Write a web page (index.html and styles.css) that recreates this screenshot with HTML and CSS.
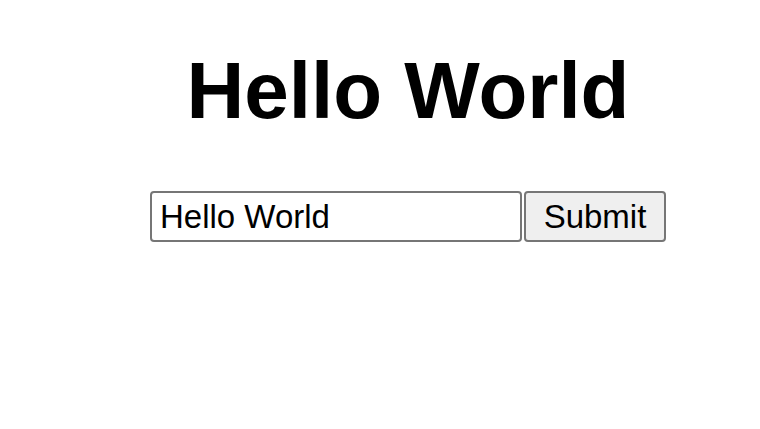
FILE: index.html
```html
<!DOCTYPE html>
<html>
<head>
<meta charset="utf-8">
<link rel="stylesheet" href="styles.css">
</head>
<body>
<div class="page">
  <h1 class="title">Hello World</h1>
  <form class="form">
    <input class="field" type="text" value="Hello World">
    <button class="submit" type="button">Submit</button>
  </form>
</div>
</body>
</html>
```
FILE: styles.css
```css
html, body {
  margin: 0;
  padding: 0;
  background: #ffffff;
}
.page {
  font-family: "Liberation Sans", Arial, sans-serif;
  display: flex;
  flex-direction: column;
  align-items: center;
  padding-left: 56px;
  padding-top: 45px;
}
.title {
  margin: 0;
  font-size: 80px;
  font-weight: bold;
  line-height: 92px;
  color: #000;
}
.form {
  margin-top: 54px;
  display: flex;
  gap: 2px;
}
.field {
  box-sizing: border-box;
  width: 372px;
  height: 51px;
  margin: 0;
  padding: 0 8px;
  font-family: "Liberation Sans", Arial, sans-serif;
  font-size: 33px;
  color: #000;
  border: 2px solid #767676;
  border-radius: 4px;
  background: #fff;
  outline: none;
}
.submit {
  box-sizing: border-box;
  width: 142px;
  height: 51px;
  margin: 0;
  padding: 0 14px;
  font-family: "Liberation Sans", Arial, sans-serif;
  font-size: 33px;
  color: #000;
  background: #efefef;
  border: 2px solid #767676;
  border-radius: 4px;
}
```
